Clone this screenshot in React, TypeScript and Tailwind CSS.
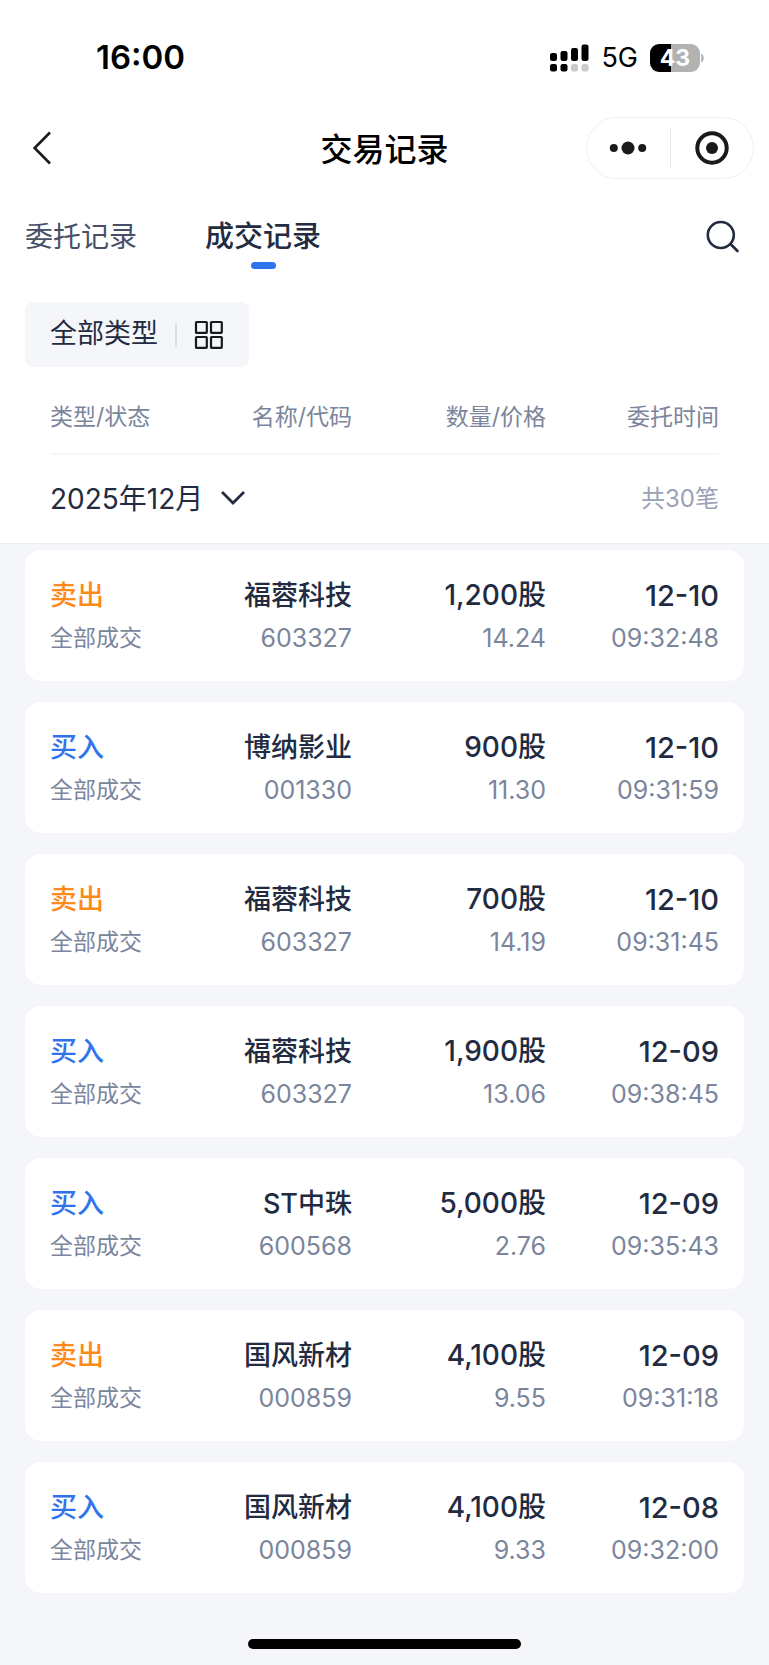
import { useState } from 'react';
import clsx from 'clsx';

type Trade = {
  side: '买入' | '卖出';
  name: string;
  code: string;
  amount: string;
  price: string;
  date: string;
  time: string;
};

const TABS = ['委托记录', '成交记录'];

const TRADES: Trade[] = [
  { side: '卖出', name: '福蓉科技', code: '603327', amount: '1,200股', price: '14.24', date: '12-10', time: '09:32:48' },
  { side: '买入', name: '博纳影业', code: '001330', amount: '900股', price: '11.30', date: '12-10', time: '09:31:59' },
  { side: '卖出', name: '福蓉科技', code: '603327', amount: '700股', price: '14.19', date: '12-10', time: '09:31:45' },
  { side: '买入', name: '福蓉科技', code: '603327', amount: '1,900股', price: '13.06', date: '12-09', time: '09:38:45' },
  { side: '买入', name: 'ST中珠', code: '600568', amount: '5,000股', price: '2.76', date: '12-09', time: '09:35:43' },
  { side: '卖出', name: '国风新材', code: '000859', amount: '4,100股', price: '9.55', date: '12-09', time: '09:31:18' },
  { side: '买入', name: '国风新材', code: '000859', amount: '4,100股', price: '9.33', date: '12-08', time: '09:32:00' },
];

function SignalIcon() {
  return (
    <svg width="40" height="28" viewBox="0 0 40 28" aria-hidden="true">
      <rect x="1" y="9" width="7" height="8" rx="2.2" />
      <rect x="11.5" y="7" width="7" height="10" rx="2.2" />
      <rect x="22" y="4" width="7" height="13" rx="2.2" />
      <rect x="32.5" y="0.5" width="7" height="16.5" rx="2.2" />
      <rect x="1" y="20" width="7" height="7.5" rx="2.2" />
      <rect x="11.5" y="20" width="7" height="7.5" rx="2.2" />
      <rect x="22" y="20" width="7" height="7.5" rx="2.2" fill="#cacaca" />
      <rect x="32.5" y="20" width="7" height="7.5" rx="2.2" fill="#cacaca" />
    </svg>
  );
}

function StatusBar() {
  return (
    <div className="flex h-[116px] items-center justify-between pr-16 pl-24 text-black">
      <span className="text-[33px] font-semibold">16:00</span>
      <div className="flex items-center">
        <SignalIcon />
        <span className="ml-3 text-[27px]">5G</span>
        <span className="ml-3 flex h-7 w-[50px] items-center justify-center rounded-[9px] bg-linear-to-r from-black from-43% to-[#b2b2b2] to-43% text-[23px] font-bold text-white">
          43
        </span>
        <svg width="5" height="10" viewBox="0 0 5 10" aria-hidden="true">
          <path d="M1.2 0.5C4.6 2 4.6 8 1.2 9.5Z" fill="#b2b2b2" />
        </svg>
      </div>
    </div>
  );
}

function NavBar() {
  return (
    <header className="grid h-16 grid-cols-[1fr_auto_1fr] items-center px-[15px]">
      <button type="button" aria-label="返回" className="justify-self-start pl-4">
        <svg width="22" height="34" viewBox="0 0 22 34" fill="none" stroke="#1a1a1a" strokeWidth="2.6">
          <path d="M19 1.5L3.6 17L19 32.5" />
        </svg>
      </button>
      <h1 className="pt-1 text-[32px] font-medium text-black">交易记录</h1>
      <div className="flex h-[62px] w-[168px] items-center justify-self-end rounded-full border border-[#f0f0f0]">
        <button type="button" aria-label="更多" className="flex flex-1 justify-center">
          <svg width="38" height="14" viewBox="0 0 38 14" fill="#1a1a1a">
            <circle cx="4.8" cy="7" r="4" />
            <circle cx="19" cy="7" r="6.5" />
            <circle cx="33.2" cy="7" r="4" />
          </svg>
        </button>
        <span className="h-10 w-px bg-[#e8e8e8]" />
        <button type="button" aria-label="关闭" className="flex flex-1 justify-center">
          <svg width="34" height="34" viewBox="0 0 34 34">
            <circle cx="17" cy="17" r="14.7" fill="none" stroke="#1a1a1a" strokeWidth="4" />
            <circle cx="17" cy="17" r="6" fill="#1a1a1a" />
          </svg>
        </button>
      </div>
    </header>
  );
}

function TradeRow({ trade }: { trade: Trade }) {
  return (
    <tr className="grid grid-cols-[108fr_194fr_194fr_173fr] rounded-2xl bg-white px-[25px] pt-6 pb-[21px] text-right text-[25px] leading-[43px] whitespace-nowrap text-[#7b859c]">
      <td className="text-left">
        <div
          className={clsx(
            'text-[27px] font-medium',
            trade.side === '买入' ? 'text-[#2f74ee]' : 'text-[#ff8a1c]',
          )}
        >
          {trade.side}
        </div>
        <div className="text-[23px]">全部成交</div>
      </td>
      <td>
        <div className="text-[27px] font-medium text-[#222b3f]">{trade.name}</div>
        <div>{trade.code}</div>
      </td>
      <td>
        <div className="text-[28px] font-medium text-[#222b3f]">{trade.amount}</div>
        <div>{trade.price}</div>
      </td>
      <td>
        <div className="text-[29px] font-medium text-[#222b3f]">{trade.date}</div>
        <div>{trade.time}</div>
      </td>
    </tr>
  );
}

export default function App() {
  const [tab, setTab] = useState('成交记录');

  return (
    <div className="flex min-h-screen flex-col bg-[#f4f6fa] font-['Inter','Noto_Sans_CJK_SC',sans-serif] text-[#222b3f]">
      <div className="bg-white">
        <StatusBar />
        <NavBar />

        <div className="flex items-center justify-between px-[25px] pt-6">
          <nav className="flex gap-[68px]">
            {TABS.map(item => (
              <button
                key={item}
                type="button"
                onClick={() => setTab(item)}
                className={clsx(
                  'flex flex-col items-center pt-2 leading-[50px]',
                  tab === item ? 'text-[29px] font-medium' : 'text-[28px] text-[#475066]',
                )}
              >
                {item}
                <span className={clsx('h-[7px] w-[25px] rounded-full', tab === item && 'bg-[#2f74ee]')} />
              </button>
            ))}
          </nav>
          <button type="button" aria-label="搜索">
            <svg width="38" height="34" viewBox="0 0 38 34" fill="none" stroke="#222b3f" strokeWidth="2.6" strokeLinecap="round">
              <circle cx="14.8" cy="15" r="13" />
              <path d="M24.5 24L31.5 31" />
            </svg>
          </button>
        </div>

        <div className="px-[25px] pt-[33px]">
          <button type="button" className="flex h-[65px] items-center rounded-lg bg-[#f4f6fa] px-[25px] text-[27px]">
            全部类型
            <span className="mx-[17px] h-6 w-0.5 bg-[#d9dde6]" />
            <svg width="30" height="30" viewBox="0 0 30 30" fill="none" stroke="#17191f" strokeWidth="2.2">
              <rect x="2" y="2" width="10.8" height="10.8" rx="0.6" />
              <rect x="17" y="2" width="10.8" height="10.8" rx="0.6" />
              <rect x="2" y="17" width="10.8" height="10.8" rx="0.6" />
              <rect x="17" y="17" width="10.8" height="10.8" rx="0.6" />
            </svg>
          </button>
        </div>
      </div>

      <table className="block">
        <thead className="block border-b border-[#eceef3] bg-white px-[50px]">
          <tr className="grid grid-cols-[108fr_194fr_194fr_173fr] border-b-2 border-[#f5f6f9] pt-[29px] pb-[15px] text-right text-[23px] leading-[42px] whitespace-nowrap text-[#7b859c]">
            <th className="text-left font-normal">类型/状态</th>
            <th className="font-normal">名称/代码</th>
            <th className="font-normal">数量/价格</th>
            <th className="font-normal">委托时间</th>
          </tr>
          <tr className="flex h-[88px] items-center justify-between">
            <th className="font-normal">
              <label className="relative flex items-center">
                <select aria-label="月份" className="appearance-none bg-transparent pr-[42px] text-[28px] outline-none">
                  <option>2025年12月</option>
                </select>
                <svg
                  className="pointer-events-none absolute right-0"
                  width="26"
                  height="16"
                  viewBox="0 0 26 16"
                  fill="none"
                  stroke="#222b3f"
                  strokeWidth="2.8"
                >
                  <path d="M2 1L13 12L24 1" />
                </svg>
              </label>
            </th>
            <td className="text-[24px] text-[#9aa2b6]">共30笔</td>
          </tr>
        </thead>
        <tbody className="flex flex-col gap-[21px] px-[25px] pt-1.5">
          {TRADES.map(trade => (
            <TradeRow key={trade.date + trade.time} trade={trade} />
          ))}
        </tbody>
      </table>

      <footer className="mt-auto flex justify-center pt-10 pb-4">
        <div className="h-2.5 w-[273px] rounded-full bg-black" />
      </footer>
    </div>
  );
}
